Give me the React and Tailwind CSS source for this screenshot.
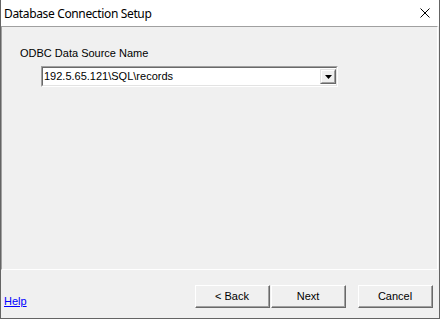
import React from 'react';

function WinButton({ children, className = '' }) {
  return (
    <div className={`w-[75px] h-[23px] border-t border-l border-white border-r border-b border-r-[#696969] border-b-[#696969] ${className}`}>
      <div className="w-full h-full border-r border-b border-[#a0a0a0] bg-[#f0f0f0] flex items-center justify-center text-[11px] leading-none text-black">
        {children}
      </div>
    </div>
  );
}

export default function App() {
  return (
    <div className="w-[441px] h-[319px] bg-white" style={{ fontFamily: '"Liberation Sans", Arial, sans-serif' }}>
      <div className="w-[440px] h-[319px] flex flex-col border-l border-r border-b border-[#646464] bg-[#f0f0f0]">
        {/* title bar */}
        <div className="h-[26px] bg-white flex items-center justify-between pl-[3px] pr-[9px] shrink-0">
          <span className="text-[12px] leading-none tracking-[-0.35px] text-black pt-[1px]" style={{ fontFamily: '"Noto Sans", "Open Sans", sans-serif' }}>
            Database Connection Setup
          </span>
          <svg width="10" height="10" viewBox="0 0 10 10">
            <path d="M0.5 0.5 L9.5 9.5 M9.5 0.5 L0.5 9.5" stroke="#000" strokeWidth="1" fill="none" />
          </svg>
        </div>

        {/* main panel */}
        <div className="w-[437px] h-[244px] shrink-0 border-t border-l border-[#a0a0a0] border-r-white border-b-white border-r border-b pt-[20px] pl-[18px]">
          <div className="text-[11px] leading-[13px] text-black">ODBC Data Source Name</div>
          <div className="mt-[6px] ml-[21px] w-[297px] h-[21px] border-t border-l border-[#a0a0a0] border-r border-b border-r-white border-b-white">
            <div className="w-full h-full border-t border-l border-[#696969] border-r border-b border-r-[#e3e3e3] border-b-[#e3e3e3] bg-white flex items-center">
              <span className="flex-1 pl-[1px] text-[11px] leading-none text-black">192.5.65.121\SQL\records</span>
              <div className="w-[16px] h-[15px] border-t border-l border-[#e3e3e3] border-r border-b border-r-[#696969] border-b-[#696969]">
                <div className="w-full h-full bg-[#f0f0f0] border-t border-l border-white border-r border-b border-r-[#a0a0a0] border-b-[#a0a0a0] flex items-center justify-center">
                  <svg width="7" height="4" viewBox="0 0 7 4">
                    <path d="M0 0 H7 L3.5 4 Z" fill="#000" />
                  </svg>
                </div>
              </div>
            </div>
          </div>
        </div>

        {/* footer */}
        <div className="flex-1 flex items-start pl-[3px] pt-[15px]">
          <a className="mt-[10px] text-[11px] leading-[13px] text-[#0000ff] underline cursor-pointer">Help</a>
          <div className="ml-auto flex mr-[6px]">
            <WinButton>&lt; Back</WinButton>
            <WinButton className="ml-[1px]">Next</WinButton>
            <WinButton className="ml-[12px]">Cancel</WinButton>
          </div>
        </div>
      </div>
    </div>
  );
}
